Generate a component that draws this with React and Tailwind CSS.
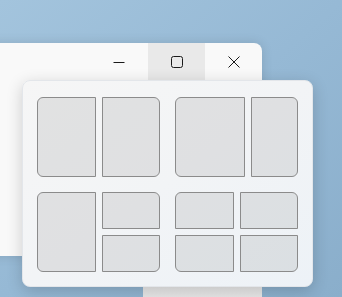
import React from "react";

function Tile({ className = "" }) {
  return <div className={"border border-[#8b8b8b] bg-black/[0.08] " + className} />;
}

export default function App() {
  return (
    <div className="relative w-[342px] h-[297px] overflow-hidden bg-gradient-to-br from-[#a3c4dd] via-[#96b9d5] to-[#8aaecb]">
      {/* lower strip of another window */}
      <div className="absolute left-[143px] top-[280px] w-[119px] h-[30px] bg-gradient-to-b from-[#ececec] to-[#e2e2e2]" />
      {/* window */}
      <div className="absolute left-[-20px] top-[43px] w-[282px] h-[213px] bg-[#f9f9f9] rounded-tr-[8px] shadow-[0_0_12px_rgba(0,0,0,0.12)] flex flex-col">
        <div className="flex justify-end h-[37px]">
          <div className="w-[57px] h-full flex items-center justify-center pr-[2px]">
            <svg width="12" height="12" viewBox="0 0 12 12">
              <path d="M0.5 6.5 H11.5" stroke="#1a1a1a" strokeWidth="1" />
            </svg>
          </div>
          <div className="w-[57px] h-full flex items-center justify-center bg-[#e9e9e9]">
            <svg width="12" height="12" viewBox="0 0 12 12">
              <rect x="0.5" y="0.5" width="11" height="11" rx="2" fill="none" stroke="#1a1a1a" strokeWidth="1" />
            </svg>
          </div>
          <div className="w-[57px] h-full flex items-center justify-center rounded-tr-[8px]">
            <svg width="12" height="12" viewBox="0 0 12 12">
              <path d="M0.5 0.5 L11.5 11.5 M11.5 0.5 L0.5 11.5" stroke="#1a1a1a" strokeWidth="1" />
            </svg>
          </div>
        </div>
      </div>
      {/* snap layouts flyout */}
      <div className="absolute left-[22px] top-[80px] w-[291px] h-[207px] rounded-[8px] bg-gradient-to-br from-[#f6f6f6] via-[#f2f4f6] to-[#edf2f7] border border-[#e3e6ea] shadow-[0_4px_16px_rgba(0,0,0,0.18)] pt-[16px] px-[14px] pb-[14px] grid grid-cols-2 grid-rows-2 gap-[15px]">
        {/* layout 1: 50/50 */}
        <div className="grid grid-cols-2 gap-[6px]">
          <Tile className="rounded-l-[6px]" />
          <Tile className="rounded-r-[6px]" />
        </div>
        {/* layout 2: 60/40 */}
        <div className="grid grid-cols-[70px_1fr] gap-[6px]">
          <Tile className="rounded-l-[6px]" />
          <Tile className="rounded-r-[6px]" />
        </div>
        {/* layout 3: left + two stacked */}
        <div className="grid grid-cols-2 grid-rows-2 gap-[6px]">
          <Tile className="row-span-2 rounded-l-[6px]" />
          <Tile className="rounded-tr-[6px]" />
          <Tile className="rounded-br-[6px]" />
        </div>
        {/* layout 4: quadrants */}
        <div className="grid grid-cols-2 grid-rows-2 gap-[6px]">
          <Tile className="rounded-tl-[6px]" />
          <Tile className="rounded-tr-[6px]" />
          <Tile className="rounded-bl-[6px]" />
          <Tile className="rounded-br-[6px]" />
        </div>
      </div>
    </div>
  );
}
